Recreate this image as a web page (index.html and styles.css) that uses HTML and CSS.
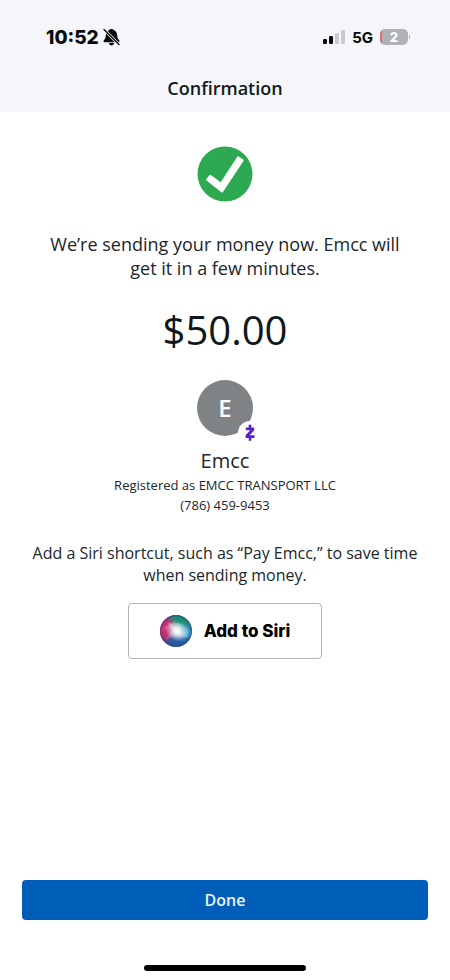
FILE: index.html
```html
<!DOCTYPE html>
<html lang="en">
<head>
<meta charset="utf-8">
<meta name="viewport" content="width=device-width, initial-scale=1">
<title>Confirmation</title>
<link rel="stylesheet" href="styles.css">
</head>
<body>
<div class="screen">
  <header class="header">
    <div class="status">
      <div class="status-group">
        <span class="time">10:52</span>
        <svg class="bell" viewBox="0 0 17 18" aria-hidden="true">
          <path d="M8.500 1C7.200 1 6.300 1.700 6.100 2.300C3.800 3.200 2.900 5 2.800 7.300C2.700 10.300 1.700 11.100 .7 12.600C.2 13.300 .6 14.200 1.500 14.200H15.500C16.400 14.200 16.800 13.300 16.300 12.600C15.300 11.100 14.300 10.300 14.200 7.300C14.100 5 13.200 3.200 10.900 2.300C10.700 1.700 9.800 1 8.500 1ZM5.800 15H11.200C10.800 16.700 9.700 17.400 8.500 17.400S6.200 16.700 5.800 15Z" fill="#080a0c"/>
          <path d="M1 1.500L16 16.500" stroke="#f5f6fa" stroke-width="3"/>
          <path d="M1 1.500L16 16.500" stroke="#080a0c" stroke-width="1.400" stroke-linecap="round"/>
        </svg>
      </div>
      <div class="status-group status-right">
        <svg class="signal" viewBox="0 0 22 15" aria-hidden="true">
          <rect y="9" width="4" height="5" rx="1.200" fill="#080a0c"/>
          <rect x="6" y="6" width="4" height="8" rx="1.200" fill="#080a0c"/>
          <rect x="12" y="3" width="4" height="11" rx="1.200" fill="#c9cacd"/>
          <rect x="18" y="0" width="4" height="14" rx="1.200" fill="#c9cacd"/>
        </svg>
        <span class="network">5G</span>
        <span class="battery"><span class="battery-body">2</span></span>
      </div>
    </div>
    <h1 class="title">Confirmation</h1>
  </header>
  <main class="content">
    <svg class="check" viewBox="0 0 56 56" aria-hidden="true">
      <circle cx="28" cy="28" r="27.500" fill="#2ca951"/>
      <path d="M12.300 29.300L9.200 33.300Q8.800 34 9.500 34.500L24.300 46.300Q25.300 46.900 26 46L46.600 14.800Q47 14 46.300 13.500L41.800 10.400Q41 9.900 40.300 10.700L23.600 36.300L13.900 29Q13 28.500 12.300 29.300Z" fill="#fff"/>
    </svg>
    <p class="message">We’re sending your money now. Emcc will get it in a few minutes.</p>
    <p class="amount">$50.00</p>
    <div class="avatar">
      <span>E</span>
      <svg class="zelle" viewBox="0 0 24 24" aria-hidden="true">
        <circle cx="12" cy="12" r="12" fill="#fff"/>
        <path d="M7.800 6.500H16.200V9.200L11.700 14.300H16.500V17H13.300V19.800H10.700V17H7.600V14.300L12.200 9.200H7.800V6.500H10.700V3.700H13.300V6.500Z" fill="#5b1fc4"/>
      </svg>
    </div>
    <h2 class="name">Emcc</h2>
    <p class="detail">Registered as EMCC TRANSPORT LLC</p>
    <p class="detail">(786) 459-9453</p>
    <p class="hint">Add a Siri shortcut, such as “Pay Emcc,” to save time when sending money.</p>
    <button class="siri" type="button">
      <svg class="orb" viewBox="0 0 32 32" aria-hidden="true">
        <defs>
          <clipPath id="disc"><circle cx="16" cy="16" r="16"/></clipPath>
          <radialGradient id="glow"><stop offset="0" stop-color="#fff"/><stop offset=".3" stop-color="#fff" stop-opacity=".85"/><stop offset="1" stop-color="#fff" stop-opacity="0"/></radialGradient>
          <radialGradient id="pink"><stop offset="0" stop-color="#d8327a"/><stop offset=".5" stop-color="#c22e6d"/><stop offset="1" stop-color="#a33b78" stop-opacity="0"/></radialGradient>
          <radialGradient id="green"><stop offset="0" stop-color="#199078"/><stop offset=".5" stop-color="#278b7b"/><stop offset="1" stop-color="#36a69c" stop-opacity="0"/></radialGradient>
          <radialGradient id="cyan"><stop offset="0" stop-color="#47c5e7"/><stop offset="1" stop-color="#3896cf" stop-opacity="0"/></radialGradient>
          <radialGradient id="rim"><stop offset=".8" stop-color="#24336d" stop-opacity="0"/><stop offset="1" stop-color="#24336d" stop-opacity=".5"/></radialGradient>
        </defs>
        <g clip-path="url(#disc)">
          <rect width="32" height="32" fill="#3b5396"/>
          <ellipse cx="20" cy="4" rx="18" ry="15" fill="url(#green)"/>
          <ellipse cx="3" cy="13" rx="14" ry="17" fill="url(#pink)"/>
          <ellipse cx="26" cy="18" rx="12" ry="12" fill="url(#cyan)"/>
          <ellipse cx="20" cy="30" rx="13" ry="8" fill="#1763a8" opacity=".5"/>
          <path d="M3 15C8 6 22 5 29 17C21 12 12 12 3 15Z" fill="#d5e2de" opacity=".2"/>
          <path d="M6 25C9 15 18 12 29 22C21 22 14 20 6 25Z" fill="#c7b7e5" opacity=".25"/>
          <path d="M7 6L18 13L22 20L13 18Z" fill="#fff" opacity=".2"/>
          <ellipse cx="17" cy="16" rx="12" ry="10" transform="rotate(30 17 16)" fill="url(#glow)"/>
          <circle cx="16" cy="16" r="16" fill="url(#rim)"/>
        </g>
      </svg>
      <span>Add to Siri</span>
    </button>
  </main>
  <footer class="footer">
    <button class="done" type="button">Done</button>
    <div class="home-bar"></div>
  </footer>
</div>
</body>
</html>
```
FILE: styles.css
```css
* {
  box-sizing: border-box;
}

body {
  margin: 0;
  background: #fff;
  color: #20262b;
  font-family: "Open Sans", "Noto Sans", sans-serif;
}

h1,
h2,
p {
  margin: 0;
  font-weight: 400;
}

button {
  cursor: pointer;
}

.screen {
  display: flex;
  flex-direction: column;
  min-height: 100vh;
}

.header {
  padding: 24px 40px 12px;
  background: #f5f6fa;
}

.status {
  display: flex;
  align-items: center;
  justify-content: space-between;
  height: 26px;
  padding-left: 6px;
  color: #080a0c;
  font-family: Inter, sans-serif;
}

.status-group {
  display: flex;
  align-items: center;
  gap: 4px;
}

.status-right {
  gap: 7px;
}

.time {
  font-size: 19px;
  font-weight: 800;
}

.bell {
  width: 17px;
  height: 18px;
}

.signal {
  width: 22px;
  height: 15px;
}

.network {
  font-size: 15px;
  font-weight: 700;
}

.battery {
  display: flex;
  align-items: center;
  gap: 1px;
}

.battery::after {
  width: 1px;
  height: 4px;
  background: #b1b2b4;
  content: "";
}

.battery-body {
  width: 28px;
  border-radius: 5px;
  background: linear-gradient(to right, #e26d70 2px, #b1b2b4 2px);
  color: #fff;
  font-size: 13px;
  font-weight: 800;
  line-height: 16px;
  text-align: center;
}

.title {
  margin-top: 26px;
  color: #14191d;
  font-size: 18px;
  font-weight: 600;
  line-height: 24px;
  text-align: center;
}

.content {
  display: flex;
  flex: 1;
  flex-direction: column;
  align-items: center;
  padding: 34px 24px 24px;
  text-align: center;
}

.check {
  width: 56px;
  height: 56px;
}

.message {
  max-width: 360px;
  margin-top: 30px;
  font-size: 18px;
  line-height: 24px;
}

.amount {
  margin-top: 26px;
  color: #0f171c;
  font-size: 40px;
  line-height: 48px;
}

.avatar {
  position: relative;
  display: grid;
  place-items: center;
  width: 56px;
  height: 56px;
  margin-top: 26px;
  border-radius: 50%;
  background: #808386;
  color: #fff;
  font-size: 24px;
  font-weight: 600;
  line-height: 32px;
}

.zelle {
  position: absolute;
  right: -9px;
  bottom: -9px;
  width: 24px;
  height: 24px;
}

.name {
  margin-top: 11px;
  font-size: 20px;
  line-height: 28px;
}

.detail {
  font-size: 13px;
  line-height: 20px;
}

.hint {
  max-width: 390px;
  margin-top: 27px;
  font-size: 16px;
  line-height: 22px;
}

.siri {
  display: flex;
  align-items: center;
  justify-content: center;
  gap: 12px;
  margin-top: 17px;
  padding: 11px 31px;
  border: 1px solid #b5b5b5;
  border-radius: 4px;
  background: #fff;
  color: #000;
  font-family: Inter, sans-serif;
  font-size: 17px;
  font-weight: 800;
}

.orb {
  width: 32px;
  height: 32px;
}

.footer {
  display: flex;
  flex-direction: column;
  align-items: center;
  gap: 45px;
  padding: 0 22px 9px;
}

.done {
  width: 100%;
  height: 40px;
  border: 0;
  border-radius: 4px;
  background: #005eb8;
  color: #e8f4ff;
  font-family: inherit;
  font-size: 16px;
  font-weight: 600;
}

.home-bar {
  width: 162px;
  height: 6px;
  border-radius: 3px;
  background: #000;
}
```
